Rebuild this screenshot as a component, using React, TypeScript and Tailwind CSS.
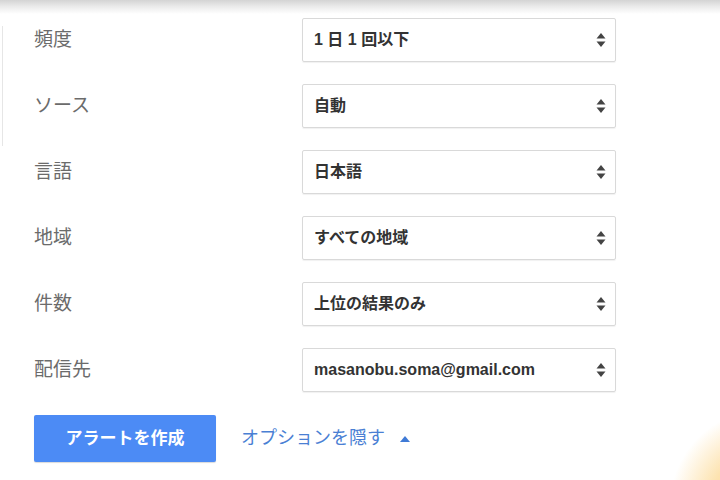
const rows = [
  { label: "頻度", value: "1 日 1 回以下" },
  { label: "ソース", value: "自動" },
  { label: "言語", value: "日本語" },
  { label: "地域", value: "すべての地域" },
  { label: "件数", value: "上位の結果のみ" },
  { label: "配信先", value: "masanobu.soma@gmail.com" },
];

const Arrows = () => (
  <svg width="10" height="16" viewBox="0 0 10 16" className="text-[#444]">
    <path d="M5 1 L9.5 6.5 H0.5 Z" fill="currentColor" />
    <path d="M5 15 L9.5 9.5 H0.5 Z" fill="currentColor" />
  </svg>
);

const App = () => {
  return (
    <div
      className="w-[720px] h-[480px] overflow-hidden bg-white bg-[radial-gradient(circle_at_765px_505px,#fbcf80_0px,#fde3b0_55px,rgba(255,255,255,0)_95px)] flex flex-col"
      style={{ fontFamily: '"Liberation Sans", "Noto Sans CJK JP", sans-serif' }}
    >
      <div className="h-[14px] shrink-0 bg-gradient-to-b from-[#d4d4d4] via-[#ececec] to-white" />
      <div className="flex flex-1">
        <div className="w-[3px] shrink-0 pt-[12px]">
          <div className="w-px h-[120px] bg-[#e6e6e6] ml-[2px]" />
        </div>
        <div className="flex flex-col pl-[31px] pt-[4px]">
          {rows.map((r) => (
            <div key={r.label} className="flex items-center h-[44px] mb-[22px]">
              <div className="w-[268px] text-[19px] text-[#6b6b6b]">{r.label}</div>
              <div className="w-[314px] h-[44px] border border-[#d9d9d9] rounded-[2px] flex items-center justify-between pl-[11px] pr-[9px] shadow-[0_1px_1px_rgba(0,0,0,0.06)]">
                <span className="text-[16px] font-bold text-[#333]">{r.value}</span>
                <Arrows />
              </div>
            </div>
          ))}
          <div className="flex items-center mt-[1px]">
            <button className="w-[182px] h-[47px] bg-[#4c8bf5] rounded-[2px] text-white font-bold text-[17px] shadow-[0_1px_1px_rgba(0,0,0,0.15)]">
              アラートを作成
            </button>
            <span className="ml-[25px] text-[18px] text-[#4a7fd4]">オプションを隠す</span>
            <svg width="12" height="8" viewBox="0 0 12 8" className="ml-[14px] text-[#3f7ad6]">
              <path d="M6 1 L11 7 H1 Z" fill="currentColor" />
            </svg>
          </div>
        </div>
      </div>
    </div>
  );
};

export default App;
